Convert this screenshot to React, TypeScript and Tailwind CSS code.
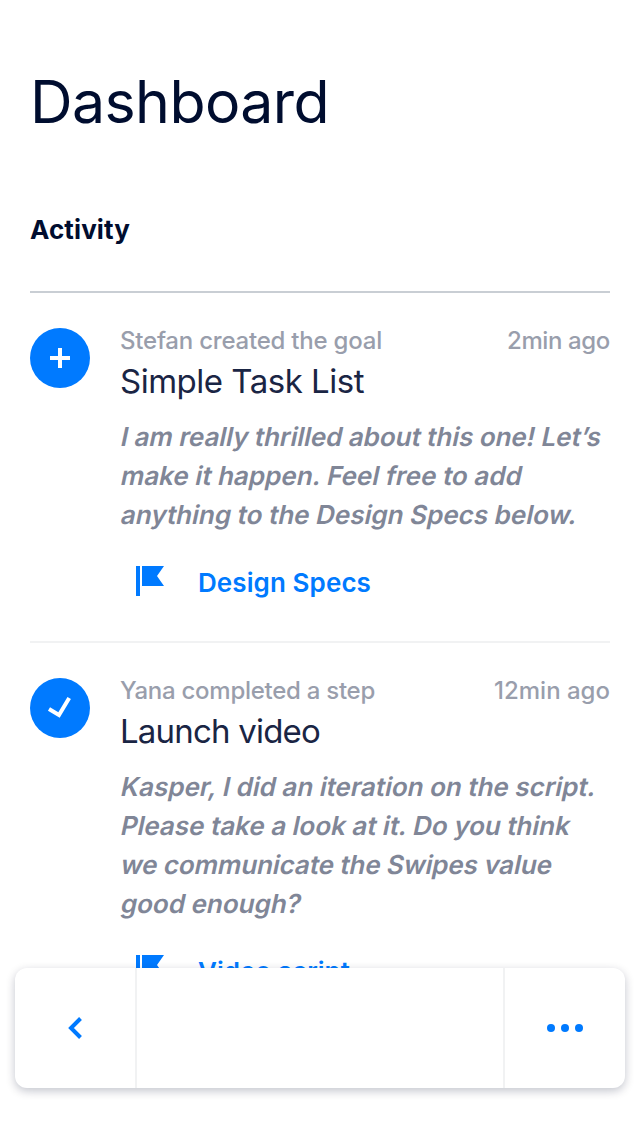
import React from 'react';

type Activity = {
  kind: 'plus' | 'check';
  meta: string;
  time: string;
  title: string;
  lines: { text: string; width: number }[];
  link: string;
  metaW: number;
  timeW: number;
  titleW: number;
  linkW: number;
};

const items: Activity[] = [
  {
    kind: 'plus', meta: 'Stefan created the goal', metaW: 262, time: '2min ago', timeW: 103,
    title: 'Simple Task List', titleW: 244,
    lines: [
      { text: 'I am really thrilled about this one! Let’s', width: 480 },
      { text: 'make it happen. Feel free to add', width: 401 },
      { text: 'anything to the Design Specs below.', width: 456 },
    ],
    link: 'Design Specs', linkW: 173,
  },
  {
    kind: 'check', meta: 'Yana completed a step', metaW: 255, time: '12min ago', timeW: 116,
    title: 'Launch video', titleW: 200,
    lines: [
      { text: 'Kasper, I did an iteration on the script.', width: 475 },
      { text: 'Please take a look at it. Do you think', width: 449 },
      { text: 'we communicate the Swipes value', width: 431 },
      { text: 'good enough?', width: 180 },
    ],
    link: 'Video script', linkW: 152,
  },
];

/* Tracks a single line of text so that it spans the given width. */
function Fit({ text, width }: { text: string; width: number }) {
  const ref = React.useRef<HTMLSpanElement>(null);
  React.useLayoutEffect(() => {
    const el = ref.current;
    if (!el) return;
    el.style.letterSpacing = '0px';
    const w = parseFloat(getComputedStyle(el).width);
    el.style.letterSpacing = `${(width - w) / text.length}px`;
  }, [text, width]);
  return <span ref={ref} className="inline-block whitespace-nowrap">{text}</span>;
}

function Flag() {
  return (
    <svg width="28" height="30" viewBox="0 0 28 30" fill="#007aff">
      <path d="M0 0h4v30H0zM6 0h22l-7 10 7 10H6z" />
    </svg>
  );
}

function Badge({ kind }: { kind: 'plus' | 'check' }) {
  return (
    <div className="size-[60px] shrink-0 rounded-full bg-[#007aff]">
      <svg width="60" height="60" viewBox="0 0 60 60" fill="none" stroke="#fff" strokeWidth="4">
        {kind === 'plus' ? <path d="M20 30h20M30 20v20" /> : <path d="M19 31l10 6L39.2 20" />}
      </svg>
    </div>
  );
}

export default function App() {
  return (
    <div className="relative h-[1136px] w-[640px] overflow-hidden bg-white px-[30px] font-['Inter',sans-serif] text-[#000d2f]">
      <h1 className="pt-[66px] text-[59px] leading-[72px]"><Fit text="Dashboard" width={299} /></h1>
      <h2 className="mt-[76px] text-[26px] leading-[32px] font-bold"><Fit text="Activity" width={100} /></h2>
      <div className="mt-[45px] h-[2px] bg-[#c9ced4]" />
      {items.map((a) => (
        <section key={a.title} className="flex h-[350px] gap-[30px] border-b-2 border-[#f1f2f3] pt-[35px]">
          <Badge kind={a.kind} />
          <div className="min-w-0 flex-1">
            <div className="flex justify-between text-[24px] leading-[26px] font-medium text-[#999eac]">
              <Fit text={a.meta} width={a.metaW} />
              <Fit text={a.time} width={a.timeW} />
            </div>
            <h3 className="mt-[7px] text-[33px] leading-[40px] text-[#1a2544]"><Fit text={a.title} width={a.titleW} /></h3>
            <div className="mt-[16px] text-[26px] leading-[39px] font-semibold text-[#808697]">
              {a.lines.map((l) => (
                <div key={l.text} className="origin-[0_68%] -skew-x-12"><Fit text={l.text} width={l.width} /></div>
              ))}
            </div>
            <div className="mt-[32px] flex gap-[34px] pl-4 text-[26px] leading-[34px] font-semibold text-[#007aff]">
              <Flag />
              <Fit text={a.link} width={a.linkW} />
            </div>
          </div>
        </section>
      ))}
      <nav className="absolute top-[968px] left-[15px] flex h-[120px] w-[610px] items-center rounded-[12px] bg-white shadow-[0_3px_10px_rgba(0,12,47,0.24)]">
        <div className="flex h-full w-[122px] items-center justify-center border-r-2 border-[#f1f2f3]">
          <svg width="14" height="22" viewBox="0 0 14 22" fill="none" stroke="#007aff" strokeWidth="4"><path d="M12.5 1.5L3 11l9.5 9.5" /></svg>
        </div>
        <div className="flex-1" />
        <div className="flex h-full w-[122px] items-center justify-center border-l-2 border-[#f1f2f3]">
          <svg width="36" height="8" viewBox="0 0 36 8" fill="#007aff"><circle cx="4" cy="4" r="4" /><circle cx="18" cy="4" r="4" /><circle cx="32" cy="4" r="4" /></svg>
        </div>
      </nav>
    </div>
  );
}
